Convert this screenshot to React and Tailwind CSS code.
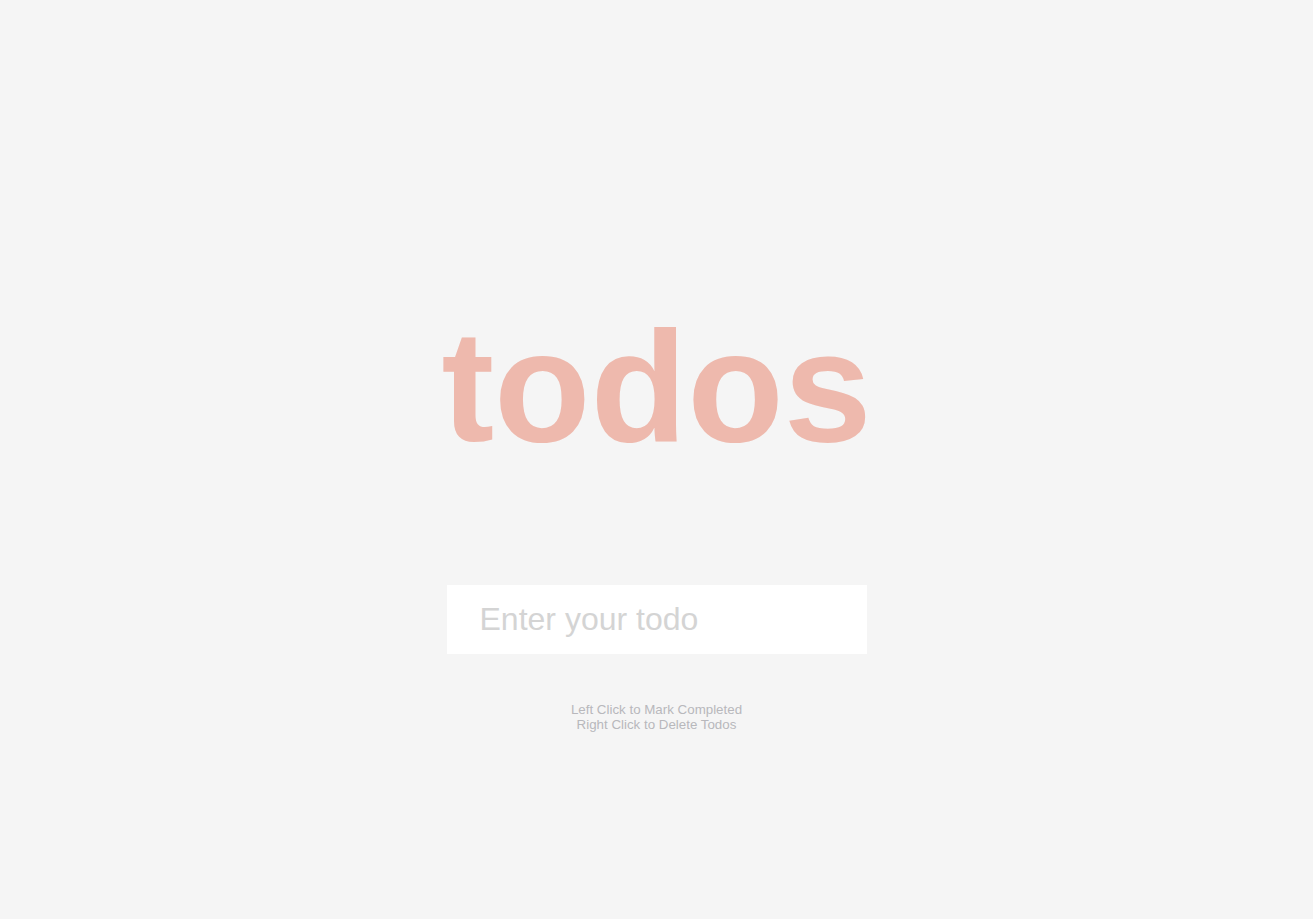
export default function App() {
  return (
    <div className="min-h-screen w-full bg-[#f5f5f5] flex flex-col items-center pt-[297px]" style={{ fontFamily: '"Liberation Sans", Arial, sans-serif' }}>
      <h1 className="text-[158px] font-bold text-[#eeb9ad] leading-[179px] m-0">todos</h1>
      <input
        type="text"
        placeholder="Enter your todo"
        className="mt-[109px] w-[420px] h-[69px] bg-white border-0 outline-none px-[33px] text-[32px] text-[#555] placeholder:text-[#d4d4d4]"
      />
      <div className="mt-[48px] text-[13.33px] leading-[15px] text-[#b8b8bc] text-center">
        <p>Left Click to Mark Completed</p>
        <p>Right Click to Delete Todos</p>
      </div>
    </div>
  );
}
